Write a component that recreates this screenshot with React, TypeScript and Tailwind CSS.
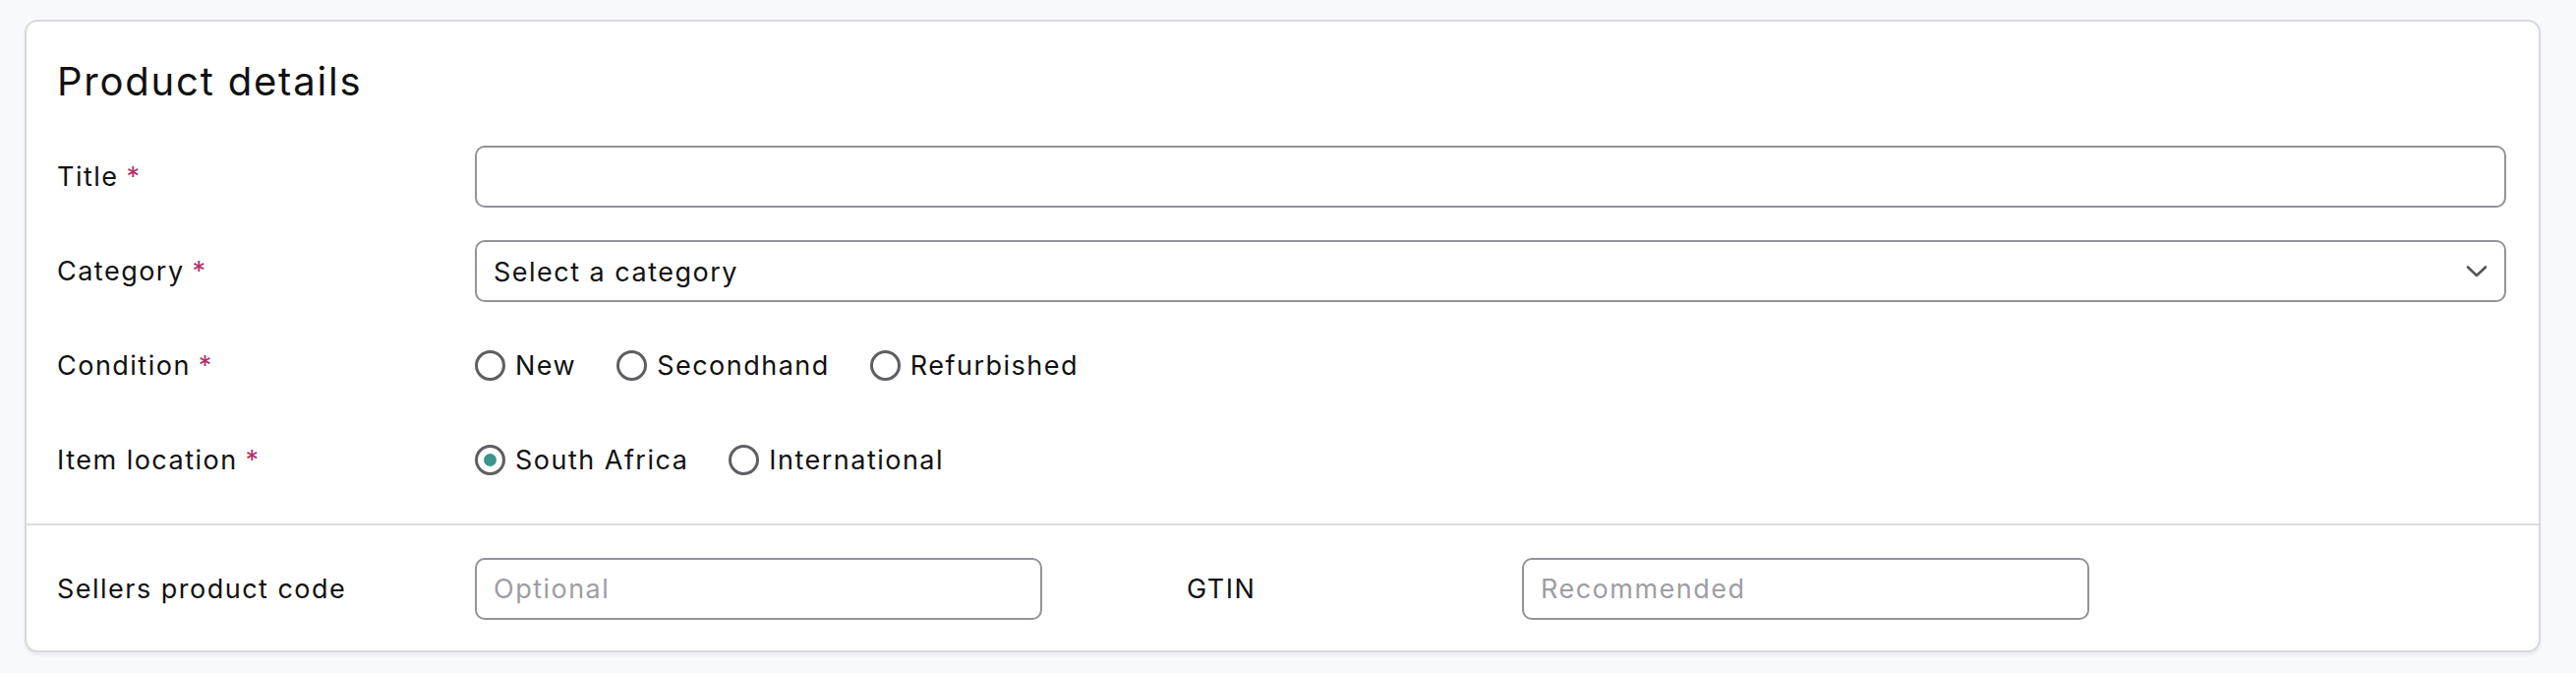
import React from "react";

function Req() {
  return <span className="ml-[8px] text-[#b0306a]">*</span>;
}

function Radio({ label, checked }: { label: string; checked?: boolean }) {
  return (
    <label className="flex items-center gap-[10px]">
      <span className="flex h-[31px] w-[31px] items-center justify-center rounded-full border-[3px] border-[#5f5f63]">
        {checked && <span className="h-[13px] w-[13px] rounded-full bg-[#3e958b]" />}
      </span>
      <span className="pt-[2px]">{label}</span>
    </label>
  );
}

function Row({ label, children }: { label: React.ReactNode; children: React.ReactNode }) {
  return (
    <div className="flex h-[63px] items-center">
      <div className="w-[425px] shrink-0 pt-[2px]">{label}</div>
      <div className="flex min-w-0 flex-1 items-center">{children}</div>
    </div>
  );
}

export default function App() {
  return (
    <div className="min-h-screen bg-[#f8f9fd] pb-[20px] pl-[25px] pr-[36px] pt-[20px] font-['Inter',sans-serif] text-[27px] tracking-[0.055em] text-[#111111]">
      <div className="rounded-[13px] border-2 border-[#d8d8dd] bg-white shadow-[0_3px_3px_rgba(0,0,0,0.06)]">
        <div className="pb-[33px] pl-[31px] pr-[33px] pt-[32px]">
          <h2 className="h-[58px] text-[40px] leading-[58px] tracking-[0.045em]">Product details</h2>
          <div className="mt-[36px] flex flex-col gap-[33px]">
            <Row
              label={
                <span>
                  Title<Req />
                </span>
              }
            >
              <input
                type="text"
                className="h-[63px] w-full rounded-[10px] border-2 border-[#939398] bg-white px-[17px] outline-none"
              />
            </Row>
            <Row
              label={
                <span>
                  Category<Req />
                </span>
              }
            >
              <div className="flex h-[63px] w-full items-center justify-between rounded-[10px] border-2 border-[#939398] bg-white pl-[17px] pr-[17px]">
                <span className="pt-[3px]">Select a category</span>
                <svg width="22" height="14" viewBox="0 0 22 14" fill="none">
                  <polyline
                    points="2,2.5 11,11 20,2.5"
                    stroke="#555558"
                    strokeWidth="2.6"
                    strokeLinecap="round"
                    strokeLinejoin="round"
                  />
                </svg>
              </div>
            </Row>
            <Row
              label={
                <span>
                  Condition<Req />
                </span>
              }
            >
              <div className="flex items-center gap-[41px]">
                <Radio label="New" />
                <Radio label="Secondhand" />
                <Radio label="Refurbished" />
              </div>
            </Row>
            <Row
              label={
                <span>
                  Item location<Req />
                </span>
              }
            >
              <div className="flex items-center gap-[41px]">
                <Radio label="South Africa" checked />
                <Radio label="International" />
              </div>
            </Row>
          </div>
        </div>
        <div className="h-[2px] bg-[#dcdce1]" />
        <div className="flex items-center pb-[31px] pl-[31px] pr-[33px] pt-[33px]">
          <div className="w-[425px] shrink-0 pt-[2px]">Sellers product code</div>
          <input
            type="text"
            placeholder="Optional"
            className="h-[63px] w-[577px] shrink-0 rounded-[10px] border-2 border-[#939398] bg-white px-[17px] outline-none placeholder:text-[#9e9ea3]"
          />
          <div className="ml-[147px] w-[341px] shrink-0 pt-[2px]">GTIN</div>
          <input
            type="text"
            placeholder="Recommended"
            className="h-[63px] w-[577px] shrink-0 rounded-[10px] border-2 border-[#939398] bg-white px-[17px] outline-none placeholder:text-[#9e9ea3]"
          />
        </div>
      </div>
    </div>
  );
}
